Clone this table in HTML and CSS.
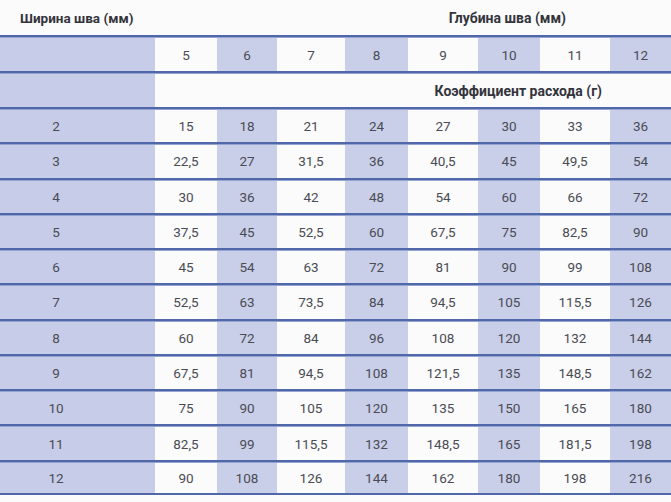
FILE: index.html
```html
<!DOCTYPE html>
<html lang="ru">
<head>
<meta charset="utf-8">
<link rel="stylesheet" href="styles.css">
</head>
<body>
<div class="grid">
  <div class="title-left">Ширина шва (мм)</div>
  <div class="title-right">Глубина шва (мм)</div>

  <div class="c first s"></div>
  <div class="c">5</div><div class="c s">6</div><div class="c">7</div><div class="c s">8</div>
  <div class="c">9</div><div class="c s">10</div><div class="c">11</div><div class="c s">12</div>

  <div class="c first s"></div>
  <div class="c coef">Коэффициент расхода (г)</div>

  <div class="c first s">2</div>
  <div class="c">15</div><div class="c s">18</div><div class="c">21</div><div class="c s">24</div>
  <div class="c">27</div><div class="c s">30</div><div class="c">33</div><div class="c s">36</div>

  <div class="c first s">3</div>
  <div class="c">22,5</div><div class="c s">27</div><div class="c">31,5</div><div class="c s">36</div>
  <div class="c">40,5</div><div class="c s">45</div><div class="c">49,5</div><div class="c s">54</div>

  <div class="c first s">4</div>
  <div class="c">30</div><div class="c s">36</div><div class="c">42</div><div class="c s">48</div>
  <div class="c">54</div><div class="c s">60</div><div class="c">66</div><div class="c s">72</div>

  <div class="c first s">5</div>
  <div class="c">37,5</div><div class="c s">45</div><div class="c">52,5</div><div class="c s">60</div>
  <div class="c">67,5</div><div class="c s">75</div><div class="c">82,5</div><div class="c s">90</div>

  <div class="c first s">6</div>
  <div class="c">45</div><div class="c s">54</div><div class="c">63</div><div class="c s">72</div>
  <div class="c">81</div><div class="c s">90</div><div class="c">99</div><div class="c s">108</div>

  <div class="c first s">7</div>
  <div class="c">52,5</div><div class="c s">63</div><div class="c">73,5</div><div class="c s">84</div>
  <div class="c">94,5</div><div class="c s">105</div><div class="c">115,5</div><div class="c s">126</div>

  <div class="c first s">8</div>
  <div class="c">60</div><div class="c s">72</div><div class="c">84</div><div class="c s">96</div>
  <div class="c">108</div><div class="c s">120</div><div class="c">132</div><div class="c s">144</div>

  <div class="c first s">9</div>
  <div class="c">67,5</div><div class="c s">81</div><div class="c">94,5</div><div class="c s">108</div>
  <div class="c">121,5</div><div class="c s">135</div><div class="c">148,5</div><div class="c s">162</div>

  <div class="c first s">10</div>
  <div class="c">75</div><div class="c s">90</div><div class="c">105</div><div class="c s">120</div>
  <div class="c">135</div><div class="c s">150</div><div class="c">165</div><div class="c s">180</div>

  <div class="c first s">11</div>
  <div class="c">82,5</div><div class="c s">99</div><div class="c">115,5</div><div class="c s">132</div>
  <div class="c">148,5</div><div class="c s">165</div><div class="c">181,5</div><div class="c s">198</div>

  <div class="c first s last">12</div>
  <div class="c last">90</div><div class="c s last">108</div><div class="c last">126</div><div class="c s last">144</div>
  <div class="c last">162</div><div class="c s last">180</div><div class="c last">198</div><div class="c s last">216</div>
</div>
</body>
</html>
```

FILE: styles.css
```css
html, body {
  margin: 0;
  padding: 0;
  background: #fbfbfb;
}

.grid {
  display: grid;
  width: 671px;
  grid-template-columns: 155px 62px 60px 68px 63px 70px 62px 70px 61px;
  grid-template-rows: 35px 36px 36px repeat(11, 35.27px);
  font-family: Roboto, "Liberation Sans", sans-serif;
  color: #4a4b54;
}

.title-left {
  grid-column: 1 / 4;
  display: flex;
  align-items: center;
  padding-left: 20px;
  font-weight: bold;
  font-size: 13.5px;
  color: #34343c;
}

.title-right {
  grid-column: 4 / 10;
  display: flex;
  align-items: center;
  justify-content: flex-end;
  padding-right: 105px;
  font-weight: bold;
  font-size: 14px;
  color: #34343c;
}

.c {
  box-sizing: border-box;
  border-top: 2px solid #5068a9;
  box-shadow: inset 0 1px 0 #94a3d0;
  display: flex;
  align-items: center;
  justify-content: center;
  font-size: 13.5px;
  padding-top: 1px;
  background: #fbfbfb;
}

.c.s {
  background: #c9cfe9;
}

.c.first {
  background: #c7cde8;
  padding-right: 43px;
}

.c.coef {
  grid-column: 2 / 10;
  justify-content: flex-end;
  padding-right: 69px;
  font-weight: bold;
  font-size: 14px;
  color: #34343c;
}

.c.last {
  border-bottom: 2px solid #5068a9;
}
```
